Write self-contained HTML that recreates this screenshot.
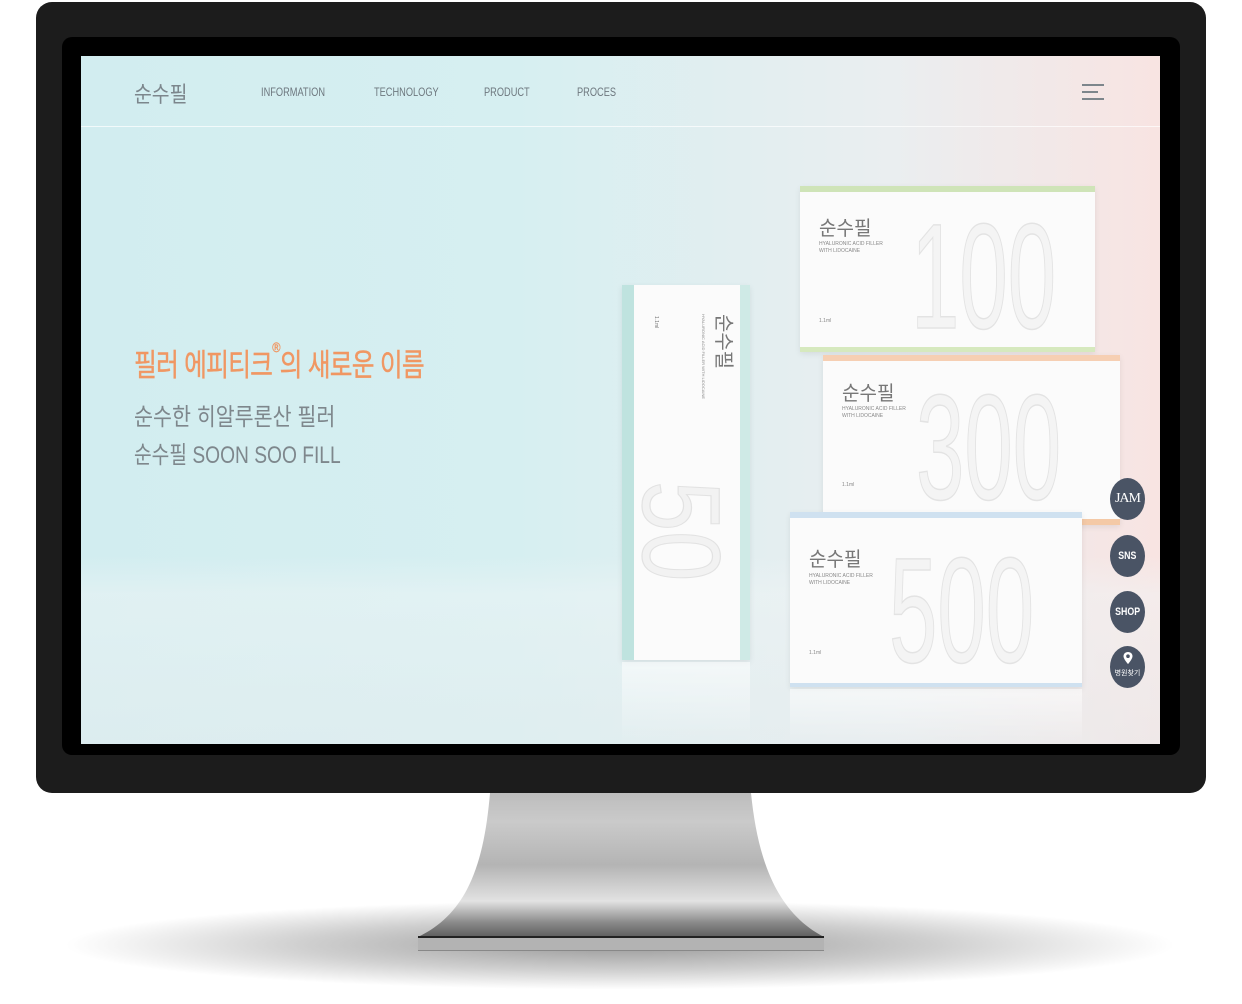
<!DOCTYPE html>
<html><head><meta charset="utf-8"><style>
*{margin:0;padding:0;box-sizing:border-box}
body{width:1242px;height:1004px;background:#fff;position:relative;overflow:hidden;font-family:"Liberation Sans","Noto Sans CJK KR",sans-serif}
.abs{position:absolute}
.shadow{left:60px;top:900px;width:1120px;height:90px;border-radius:50%;background:radial-gradient(ellipse at center,rgba(120,120,120,.75) 0%,rgba(160,160,160,.5) 40%,rgba(255,255,255,0) 70%)}
.outer{left:36px;top:2px;width:1170px;height:791px;background:#1c1c1c;border-radius:16px}
.inner{left:62px;top:37px;width:1118px;height:718px;background:#000;border-radius:10px}
.screen{left:81px;top:56px;width:1079px;height:688px;overflow:hidden;background:linear-gradient(90deg,#d2edf0 0%,#d6eff1 40%,#eaeef0 75%,#f8e4e2 100%)}
.floor{left:0;top:500px;width:1079px;height:188px;background:linear-gradient(180deg,rgba(255,255,255,0) 0%,rgba(240,245,246,.45) 20%,rgba(230,236,238,.5) 100%)}
.hline{left:0;top:70px;width:1079px;height:1px;background:rgba(255,255,255,.7)}
.cx{transform-origin:0 0;white-space:nowrap}
.logo{left:53px;top:21px;font-size:22px;color:#7c868c;transform:scaleX(.88)}
.nav{top:29px;font-size:12px;color:#6d777e;transform:scaleX(.77);transform-origin:0 0}
.burger{left:1001px;top:28px;width:22px}
.burger i{display:block;height:2px;background:#7d868c;margin-bottom:5px}
.h1{left:53px;top:284px;font-size:31px;color:#f09763;letter-spacing:-1px;transform:scaleX(.8);-webkit-text-stroke:.4px #f09763}
.h1 sup{font-size:14px;vertical-align:top;position:relative;top:-1px}
.sub{left:53px;font-size:24px;color:#7e878c;transform:scaleX(.86)}
.box{background:#fbfbfb;box-shadow:0 2px 6px rgba(0,0,0,.08)}
.bl{font-size:20px;color:#777;transform:scaleX(.95)}
.sm{font-size:5px;color:#888;line-height:7px}
.btn{left:1029px;width:35px;height:42px;border-radius:50%;background:#4a5465;color:#fff;text-align:center;font-weight:bold;font-size:11px;line-height:42px}
.stand{left:418px;top:793px;width:406px;height:146px}
svg text{font-family:"Liberation Sans",sans-serif}
</style></head><body>
<div class="abs shadow"></div>
<svg class="abs stand" viewBox="0 0 406 146" width="406" height="146">
<defs><linearGradient id="sg" x1="0" y1="0" x2="0" y2="1">
<stop offset="0" stop-color="#bdbdbd"/><stop offset=".2" stop-color="#cacaca"/><stop offset=".5" stop-color="#b4b4b4"/><stop offset=".75" stop-color="#e2e2e2"/><stop offset=".9" stop-color="#8a8a8a"/><stop offset="1" stop-color="#5e5e5e"/></linearGradient></defs>
<path d="M72 0 L333 0 C340 70 360 120 406 144 L0 144 C50 120 66 70 72 0 Z" fill="url(#sg)"/>
</svg>
<div class="abs" style="left:418px;top:936px;width:406px;height:2px;background:#222"></div>
<div class="abs" style="left:418px;top:938px;width:406px;height:13px;background:#b3b3b3;border-bottom:1px solid #888"></div>
<div class="abs outer"></div>
<div class="abs inner"></div>
<div class="abs screen">
  <div class="abs floor"></div>
  <div class="abs hline"></div>
  <div class="abs logo cx">순수필</div>
  <div class="abs nav" style="left:180px">INFORMATION</div>
  <div class="abs nav" style="left:293px">TECHNOLOGY</div>
  <div class="abs nav" style="left:403px">PRODUCT</div>
  <div class="abs nav" style="left:496px">PROCES</div>
  <div class="abs burger"><i></i><i style="width:16px"></i><i></i></div>
  <div class="abs h1 cx">필러 에피티크<sup>®</sup>의 새로운 이름</div>
  <div class="abs sub cx" style="top:341px">순수한 히알루론산 필러</div>
  <div class="abs sub cx" style="top:379px;transform:scaleX(.8)">순수필 SOON SOO FILL</div>

  <!-- tall box 50 -->
  <div class="abs box" style="left:541px;top:229px;width:128px;height:375px;background:linear-gradient(90deg,#bfe3df 0,#bfe3df 12px,#fbfbfb 12px,#fbfbfb 118px,#cfeae6 118px)"></div>
  <div class="abs" style="left:630px;top:258px;font-size:20px;color:#777;writing-mode:vertical-rl;text-orientation:sideways">순수필</div>
  <div class="abs" style="left:620px;top:258px;font-size:4px;color:#888;writing-mode:vertical-rl;text-orientation:sideways">HYALURONIC ACID FILLER WITH LIDOCAINE</div>
  <div class="abs" style="left:572px;top:260px;font-size:5px;color:#777;writing-mode:vertical-rl;text-orientation:sideways">1.1ml</div>
  <svg class="abs" style="left:560px;top:425px" width="100" height="145"><text transform="translate(0,0) rotate(90) scale(.82,1)" x="0" y="-2" font-size="110" fill="#f2f2f2" stroke="#e2e2e2" stroke-width="1.2">50</text></svg>

  <!-- 100 -->
  <div class="abs box" style="left:719px;top:130px;width:295px;height:166px;border-top:6px solid #cfe4b8;border-bottom:5px solid #d6e9be"></div>
  <div class="abs bl cx" style="left:738px;top:156px">순수필</div>
  <div class="abs sm" style="left:738px;top:185px">HYALURONIC ACID FILLER<br>WITH LIDOCAINE</div>
  <div class="abs sm" style="left:738px;top:262px">1.1ml</div>
  <svg class="abs" style="left:830px;top:150px" width="180" height="130"><text transform="scale(.58,1)" x="0" y="122" font-size="150" fill="#f4f4f4" stroke="#e3e3e3" stroke-width="1.5">100</text></svg>

  <!-- 300 -->
  <div class="abs box" style="left:742px;top:299px;width:297px;height:170px;border-top:6px solid #f6cfb3;border-bottom:6px solid #f4c9a6"></div>
  <div class="abs bl cx" style="left:761px;top:321px">순수필</div>
  <div class="abs sm" style="left:761px;top:350px">HYALURONIC ACID FILLER<br>WITH LIDOCAINE</div>
  <div class="abs sm" style="left:761px;top:426px">1.1ml</div>
  <svg class="abs" style="left:835px;top:318px" width="180" height="130"><text transform="scale(.58,1)" x="0" y="125" font-size="150" fill="#f4f4f4" stroke="#e3e3e3" stroke-width="1.5">300</text></svg>

  <!-- 500 -->
  <div class="abs box" style="left:709px;top:456px;width:292px;height:175px;border-top:6px solid #cfe1f0;border-bottom:4px solid #cfe1f0"></div>
  <div class="abs bl cx" style="left:728px;top:487px">순수필</div>
  <div class="abs sm" style="left:728px;top:517px">HYALURONIC ACID FILLER<br>WITH LIDOCAINE</div>
  <div class="abs sm" style="left:728px;top:594px">1.1ml</div>
  <svg class="abs" style="left:808px;top:484px" width="180" height="130"><text transform="scale(.58,1)" x="0" y="122" font-size="150" fill="#f4f4f4" stroke="#e3e3e3" stroke-width="1.5">500</text></svg>

  <!-- reflections -->
  <div class="abs" style="left:541px;top:606px;width:128px;height:82px;background:linear-gradient(180deg,rgba(255,255,255,.55),rgba(255,255,255,0))"></div>
  <div class="abs" style="left:709px;top:633px;width:292px;height:55px;background:linear-gradient(180deg,rgba(255,255,255,.55),rgba(255,255,255,0))"></div>

  <div class="abs btn" style="top:422px;font-family:'Liberation Serif',serif;font-weight:normal;font-size:14px;letter-spacing:-1px">JAM</div>
  <div class="abs btn" style="top:479px"><span style="display:inline-block;transform:scaleX(.8)">SNS</span></div>
  <div class="abs btn" style="top:535px"><span style="display:inline-block;transform:scaleX(.8)">SHOP</span></div>
  <div class="abs btn" style="top:590px;line-height:normal">
    <svg width="12" height="14" viewBox="0 0 12 14" style="margin-top:5px"><path d="M6 1C3.2 1 1.5 3 1.5 5.2 1.5 8 6 13 6 13s4.5-5 4.5-7.8C10.5 3 8.8 1 6 1z" fill="#fff"/><circle cx="6" cy="5.2" r="1.8" fill="#4a5465"/></svg>
    <div style="font-size:7px;font-weight:normal;margin-top:0">병원찾기</div>
  </div>
</div>
</body></html>
